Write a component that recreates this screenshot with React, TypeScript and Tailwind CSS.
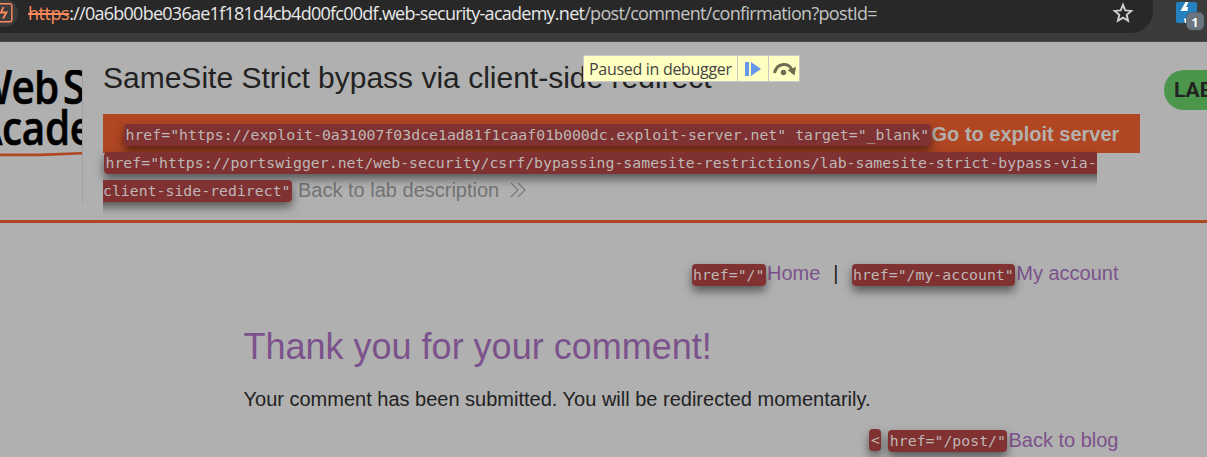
import type { ReactNode } from "react";

function Attr({ children, className = "" }: { children: ReactNode; className?: string }) {
  return (
    <span
      className={`relative rounded-[4px] bg-[#803131] px-[1.5px] pt-[2px] pb-[3px] font-['DejaVu_Sans_Mono',monospace] text-[14.8px] leading-[18px] tracking-[0.02px] text-[#beb8b6] shadow-[0_5px_10px_rgba(0,0,0,0.5)] ${className}`}
    >
      {children}
    </span>
  );
}

function Toolbar() {
  return (
    <div className="flex h-[42px] items-start border-b border-[#474747] bg-[#3b3b3b]">
      <div className="flex h-[33px] w-[1153px] items-start overflow-hidden rounded-br-[22px] bg-[#282828]">
        <div className="-ml-[10px] -mt-[1px] flex h-[28px] w-[28px] shrink-0 items-center justify-end rounded-full bg-[#3c3c3c] pr-[5px]">
          <svg className="shrink-0" width="20" height="20" viewBox="0 0 20 20" fill="none" stroke="#ff8a5c" strokeWidth="1.4">
            <rect x="0.8" y="0.8" width="18" height="18" rx="2" />
            <path d="M10.500 4 8 9.500h5.500L10 15.500" strokeWidth="1.8" />
          </svg>
        </div>
        <div className="ml-[10px] mt-[1px] whitespace-nowrap font-['Open_Sans','Noto_Sans',sans-serif] text-[18px] leading-[24px] tracking-[-0.74px] text-[#e8e8e8]">
          <span className="tracking-[-0.45px] text-[#ff8a5c] line-through decoration-2">https</span>
          ://0a6b00be036ae1f181d4cb4d00fc00df.web-security-academy.net
          <span className="tracking-[-0.68px] text-[#c4c4c4]">/post/comment/confirmation?postId=</span>
        </div>
        <svg className="ml-auto mr-[19px] mt-[2px] shrink-0" width="22" height="22" viewBox="0 0 22 22" fill="none" stroke="#d0d0d0" strokeWidth="1.9">
          <path d="m11 2.8 2.3 5.6 6 .5-4.6 3.9 1.4 5.9L11 15.6l-5.1 3.1 1.4-5.9-4.6-3.9 6-.5z" />
        </svg>
      </div>
      <svg className="ml-[22px]" width="32" height="32" viewBox="0 0 32 32">
        <rect x="1" y="2" width="21" height="21" rx="2" fill="#2580c0" />
        <path d="M10.500 2 5.500 11h7L13 7h-2l2.500-5zM9 18.500h2.500V23H10z" fill="#fff" />
        <rect x="11.500" y="12.500" width="17.500" height="17.500" rx="5" fill="#6b7580" stroke="#505860" strokeWidth="0.6" />
        <text x="20" y="26.500" textAnchor="middle" fill="#fff" fontFamily="Open Sans, sans-serif" fontWeight="700" fontSize="12">1</text>
      </svg>
    </div>
  );
}

function Header() {
  return (
    <header className="flex h-[181px] border-b-[3px] border-[#b04622]">
      <div className="mt-[28px] h-[133px] w-[83px] shrink-0 overflow-hidden border-r border-[#a0a0a0] text-black">
        <div className="-mt-[4px] h-[88px] w-[200px] origin-left scale-x-[0.87] whitespace-nowrap font-['Open_Sans',sans-serif] text-[46.5px] font-semibold leading-[41px] [-webkit-text-stroke:0.6px_black]">
          <div className="-ml-[30px] tracking-[-0.8px]">Web<span className="ml-[5px]">Security</span></div>
          <div className="-ml-[28px] tracking-[-0.4px]">Academy</div>
        </div>
        <svg className="-mt-[2px] block" width="82" height="5" viewBox="0 0 82 5">
          <path d="M0 1.500 40 1.500l42-1.500v2.500L40 4.200H0z" fill="#b04622" />
        </svg>
      </div>
      <div className="ml-[20px] w-[1037px] shrink-0">
        <h1 className="mt-[18px] whitespace-nowrap text-[30px] leading-[36px] text-[#222]">SameSite Strict bypass via client-side redirect</h1>
        <div className="mt-[18px] h-[39px] whitespace-nowrap bg-[#b04622] pl-[21px] leading-[40px]">
          <Attr className="-top-px">href="https://exploit-0a31007f03dce1ad81f1caaf01b000dc.exploit-server.net" target="_blank"</Attr>
          <span className="ml-px font-bold text-[#b4b0ae]">Go to exploit server</span>
        </div>
        <div className="-mt-[5px] whitespace-nowrap leading-[28px] text-[#737373]">
          <Attr className="-top-px ml-px">
            href="https://portswigger.net/web-security/csrf/bypassing-samesite-restrictions/lab-samesite-strict-bypass-via-<br />client-side-redirect"
          </Attr>
          <span className="ml-[6px]">Back to lab description</span>
          <svg className="ml-[11px] inline-block align-[-1px]" width="16" height="16" viewBox="0 0 16 16" fill="none" stroke="#777" strokeWidth="1.1">
            <path d="m1 1 7 7-7 7M8 1l7 7-7 7" />
          </svg>
        </div>
      </div>
      <div className="ml-[24px] mt-[28px] flex h-[40px] w-[100px] shrink-0 items-center rounded-full bg-[#4c964c] pl-[10px] pt-[2px] font-['Roboto',sans-serif] text-[21px] font-bold text-[#222]">
        LAB
      </div>
    </header>
  );
}

function DebuggerBar() {
  return (
    <div className="absolute left-[583px] top-[55px] flex h-[27px] w-[217px] border border-[#c8c8c8] bg-[#ffffc2]">
      <div className="w-[153px] whitespace-nowrap pl-[5px] font-['Open_Sans',sans-serif] text-[16px] leading-[27px] tracking-[-0.3px] text-[#444]">
        Paused in debugger
      </div>
      <div className="flex w-[31px] items-center border-l border-[#c8c8c8] pl-[7px]">
        <svg width="16" height="14" viewBox="0 0 16 14" fill="#6797e8">
          <path d="M0 0h4v14H0zM6 0l10 7-10 7z" />
        </svg>
      </div>
      <div className="flex w-[31px] items-center border-l border-[#c8c8c8] pl-[4px]">
        <svg width="24" height="14" viewBox="0 0 24 14">
          <path d="M1.500 11C4 0.500 16 0 19 8" fill="none" stroke="#6c6c50" strokeWidth="3" />
          <path d="m14.500 8 8.500-3-1.500 8.500z" fill="#6c6c50" />
          <circle cx="10.500" cy="10.500" r="2.700" fill="#6c6c50" />
        </svg>
      </div>
    </div>
  );
}

export default function App() {
  return (
    <div className="relative h-[457px] w-[1207px] overflow-hidden bg-[#b0b0b0] font-['Liberation_Sans',Arial,sans-serif] text-[20px] text-[#222]">
      <Toolbar />
      <Header />
      <main className="ml-[243.5px] w-[875px] whitespace-nowrap">
        <nav className="mt-[36px] flex h-[28px] items-center justify-end leading-[28px] text-[#7c528c]">
          <div><Attr className="right-px">href="/"</Attr>Home</div>
          <span className="ml-[13px] mr-[14px] text-[#222]">|</span>
          <div><Attr className="right-px">href="/my-account"</Attr>My account</div>
        </nav>
        <h2 className="mt-[37px] text-[36px] leading-[46px] text-[#7c528c]">Thank you for your comment!</h2>
        <p className="mt-[15px] leading-[28px]">Your comment has been submitted. You will be redirected momentarily.</p>
        <div className="mt-[13px] flex justify-end leading-[28px] text-[#7c528c]">
          <Attr className="mr-[8px] mt-[3px] h-[22px]">&lt;</Attr>
          <div><Attr className="-top-px right-px">href="/post/"</Attr>Back to blog</div>
        </div>
      </main>
      <DebuggerBar />
    </div>
  );
}
